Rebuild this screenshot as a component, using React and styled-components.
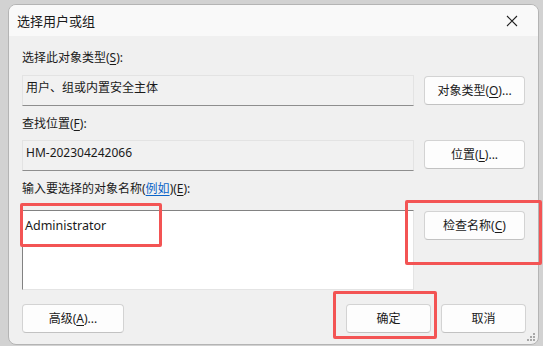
import styled, { createGlobalStyle } from "styled-components";

const GlobalStyle = createGlobalStyle`
  * { box-sizing: border-box; }
  html, body {
    margin: 0;
    background: #d2d2d2;
    font-family: "Noto Sans", "Noto Sans CJK SC", sans-serif;
    font-size: 12px;
    color: #1a1a1a;
  }
`;

const Page = styled.div`
  position: relative;
  width: 543px;
  height: 346px;
  overflow: hidden;
  padding: 4px 0 0 8px;
`;

const Dialog = styled.div`
  width: 531px;
  height: 341px;
  background: #f0f0f0;
  border: 1px solid #b4b4b4;
  border-radius: 8px;
  overflow: hidden;
  display: flex;
  flex-direction: column;
  position: relative;
`;

const TitleBar = styled.div`
  height: 31px;
  background: #f9f9f9;
  display: flex;
  align-items: center;
  justify-content: space-between;
  padding: 0 20px 0 8px;
  font-size: 13px;
  flex-shrink: 0;
`;

const Body = styled.div`
  padding: 14px 0 0 13px;
  display: flex;
  flex-direction: column;
`;

const Label = styled.div`
  line-height: 16px;
  height: 16px;
  margin-top: ${(p) => p.$top || 0}px;
`;

const Row = styled.div`
  display: grid;
  grid-template-columns: 392px 101px;
  column-gap: 10px;
  align-items: start;
  margin-top: ${(p) => p.$top || 0}px;
`;

const ReadBox = styled.div`
  height: 31px;
  background: #f1f1f1;
  border: 1px solid #e3e3e3;
  border-bottom: 1px solid #8e8e8e;
  padding: 3px 3px;
  line-height: 18px;
`;

const Field = styled.div`
  height: 80px;
  background: #ffffff;
  border-top: 1px solid #828282;
  border-left: 1px solid #828282;
  border-right: 1px solid #e4e4e4;
  border-bottom: 1px solid #e4e4e4;
  padding: 6px 2px;
  line-height: 18px;
  font-size: 12.5px;
`;

const Button = styled.div`
  width: ${(p) => p.$w || 101}px;
  height: 29px;
  margin-top: ${(p) => p.$top || 0}px;
  background: #fdfdfd;
  border: 1px solid #d3d3d3;
  border-bottom-color: #c2c2c2;
  border-radius: 4px;
  display: flex;
  align-items: center;
  justify-content: center;
  padding-bottom: 1px;
`;

const Key = styled.span`
  text-decoration: underline;
  text-underline-offset: 2px;
`;

const Link = styled.span`
  color: #0a64c8;
  text-decoration: underline;
  text-underline-offset: 2px;
`;

const Footer = styled.div`
  display: flex;
  align-items: center;
  margin-top: 14px;
  padding-right: 12px;
`;

const Spacer = styled.div`
  flex: 1;
`;

const Gap = styled.div`
  width: 10px;
`;

const Grip = styled.svg`
  position: absolute;
  right: 2px;
  bottom: 2px;
`;

const Mark = styled.div`
  position: absolute;
  border: 3px solid #f35454;
  border-radius: 2px;
  left: ${(p) => p.$x}px;
  top: ${(p) => p.$y}px;
  width: ${(p) => p.$w}px;
  height: ${(p) => p.$h}px;
  pointer-events: none;
`;

const CloseIcon = () => (
  <svg width="12" height="12" viewBox="0 0 12 12">
    <path d="M1 1 L11 11 M11 1 L1 11" stroke="#222" strokeWidth="1.1" fill="none" />
  </svg>
);

export default function App() {
  const dots = [
    [7, 1], [4, 4], [7, 4], [1, 7], [4, 7], [7, 7],
  ];
  return (
    <>
      <GlobalStyle />
      <Page>
        <Dialog>
          <TitleBar>
            <span>选择用户或组</span>
            <CloseIcon />
          </TitleBar>
          <Body>
            <Label>
              选择此对象类型(<Key>S</Key>):
            </Label>
            <Row $top={9}>
              <ReadBox>用户、组或内置安全主体</ReadBox>
              <Button $top={1}>
                对象类型(<Key>O</Key>)...
              </Button>
            </Row>
            <Label $top={10}>
              查找位置(<Key>F</Key>):
            </Label>
            <Row $top={8}>
              <ReadBox>HM-202304242066</ReadBox>
              <Button>
                位置(<Key>L</Key>)...
              </Button>
            </Row>
            <Label $top={10}>
              输入要选择的对象名称(<Link>例如</Link>)(<Key>E</Key>):
            </Label>
            <Row $top={13}>
              <Field>Administrator</Field>
              <Button $top={1}>
                检查名称(<Key>C</Key>)
              </Button>
            </Row>
            <Footer>
              <Button $w={102}>
                高级(<Key>A</Key>)...
              </Button>
              <Spacer />
              <Button $w={85}>确定</Button>
              <Gap />
              <Button $w={85}>取消</Button>
            </Footer>
          </Body>
          <Grip width="10" height="10" viewBox="0 0 10 10">
            {dots.map(([x, y]) => (
              <rect key={`${x}-${y}`} x={x} y={y} width="2" height="2" fill="#a8a8a8" />
            ))}
          </Grip>
        </Dialog>
        <Mark $x={20} $y={203} $w={142} $h={44} />
        <Mark $x={405} $y={200} $w={137} $h={65} />
        <Mark $x={333} $y={291} $w={104} $h={48} />
      </Page>
    </>
  );
}
